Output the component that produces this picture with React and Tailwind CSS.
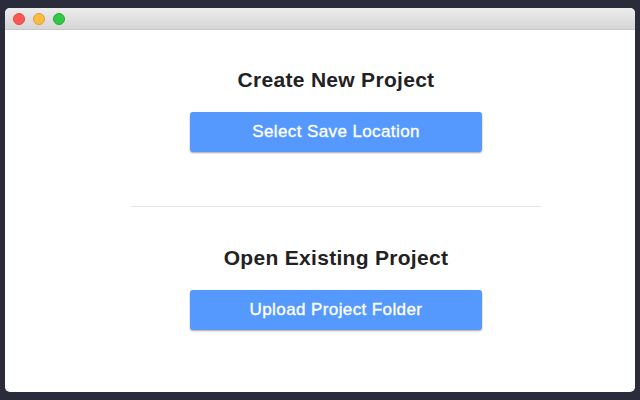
export default function App() {
  return (
    <div className="w-[640px] h-[400px] bg-[#2a2c3b] pt-[8px] pl-[5px] pr-[5px] pb-[8px]" style={{ fontFamily: '"Liberation Sans", Arial, sans-serif' }}>
      <div className="w-[630px] h-[384px] bg-white rounded-[5px] overflow-hidden flex flex-col">
        <div className="h-[22px] bg-gradient-to-b from-[#ececec] to-[#d6d6d6] border-b border-[#c8c8c8] flex items-center pl-[8px] gap-[8px]">
          <div className="w-[12px] h-[12px] rounded-full bg-[#fc5753] border border-[#df4744]" />
          <div className="w-[12px] h-[12px] rounded-full bg-[#fdbc40] border border-[#de9f34]" />
          <div className="w-[12px] h-[12px] rounded-full bg-[#33c748] border border-[#27aa35]" />
        </div>
        <div className="flex-1 flex flex-col items-center pt-[36px] pl-[32px]">
          <h1 className="text-[21px] leading-[28px] font-bold tracking-[0.3px] text-[#222]">Create New Project</h1>
          <button className="mt-[18px] w-[292px] h-[40px] bg-[#5599ff] text-white text-[17px] tracking-[0.4px] [-webkit-text-stroke:0.35px_white] rounded-[3px] shadow-[0_1px_2px_rgba(0,0,0,0.35)]">Select Save Location</button>
          <div className="mt-[54px] w-[412px] h-px bg-[#e6e6e6]" />
          <h1 className="mt-[37px] text-[21px] leading-[28px] font-bold tracking-[0.3px] text-[#222]">Open Existing Project</h1>
          <button className="mt-[18px] w-[292px] h-[40px] bg-[#5599ff] text-white text-[17px] tracking-[0.4px] [-webkit-text-stroke:0.35px_white] rounded-[3px] shadow-[0_1px_2px_rgba(0,0,0,0.35)]">Upload Project Folder</button>
        </div>
      </div>
    </div>
  );
}
